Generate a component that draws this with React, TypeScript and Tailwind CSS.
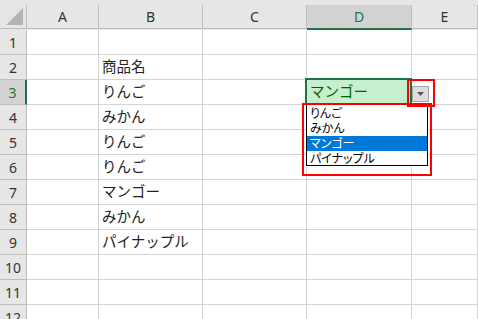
import React from "react";

const font = "font-['Noto_Sans','Noto_Sans_CJK_JP',sans-serif]";

const cols = [
  { name: "A", w: "w-[72px]" },
  { name: "B", w: "w-[104px]" },
  { name: "C", w: "w-[104px]" },
  { name: "D", w: "w-[105px]" },
  { name: "E", w: "flex-1" },
];

const values: Record<number, string> = {
  2: "商品名",
  3: "りんご",
  4: "みかん",
  5: "りんご",
  6: "りんご",
  7: "マンゴー",
  8: "みかん",
  9: "パイナップル",
};

const options = ["りんご", "みかん", "マンゴー", "パイナップル"];

function HeaderRow() {
  return (
    <div className="flex h-[30px] bg-[#e6e6e6] pt-[5px]">
      <div className="w-[27px] h-[24px] border-r border-b border-[#bdbdbd] relative">
        <svg className="absolute left-[6px] top-[3px]" width="18" height="18" viewBox="0 0 18 18">
          <polygon points="17,0 17,17 0,17" fill="#b4b4b4" />
        </svg>
      </div>
      {cols.map((c) =>
        c.name === "D" ? (
          <div
            key={c.name}
            className={`${c.w} h-[25px] -mb-px bg-[#d2d2d2] border-r border-[#bdbdbd] border-b-2 border-b-[#217346] flex items-center justify-center text-[14px] text-[#217346]`}
          >
            {c.name}
          </div>
        ) : (
          <div
            key={c.name}
            className={`${c.w} h-[24px] border-r border-b border-[#bdbdbd] flex items-center justify-center text-[14px] text-[#333]`}
          >
            {c.name}
          </div>
        )
      )}
    </div>
  );
}

function Row({ n }: { n: number }) {
  const active = n === 3;
  return (
    <div className="flex h-[25px]">
      <div
        className={
          active
            ? "w-[27px] h-[25px] bg-[#d2d2d2] border-b border-[#bdbdbd] border-r-2 border-r-[#217346] flex items-center justify-center text-[14px] text-[#217346]"
            : "w-[27px] h-[25px] bg-[#e6e6e6] border-b border-r border-[#bdbdbd] flex items-center justify-center text-[14px] text-[#333]"
        }
      >
        {n}
      </div>
      {cols.map((c) => (
        <div
          key={c.name}
          className={`${c.w} h-[25px] border-r border-b border-[#d4d4d4] flex items-center pl-[3px] text-[14.5px] text-[#222] whitespace-nowrap`}
        >
          {c.name === "B" ? values[n] : ""}
        </div>
      ))}
    </div>
  );
}

export default function App() {
  const rows = Array.from({ length: 12 }, (_, i) => i + 1);
  return (
    <div className={`relative w-[478px] h-[319px] overflow-hidden bg-white ${font}`}>
      <HeaderRow />
      {rows.map((n) => (
        <Row key={n} n={n} />
      ))}

      {/* selected cell D3 */}
      <div className="absolute left-[305px] top-[78px] w-[107px] h-[27px] border-2 border-[#217346] bg-[#c6efce] flex items-center pl-[3px] text-[14.5px] text-[#006100]">
        マンゴー
      </div>

      {/* dropdown button */}
      <div className="absolute left-[412px] top-[86px] w-[17px] h-[16px] bg-[#dedede] border border-[#a6a6a6] flex items-center justify-center">
        <svg width="7" height="4" viewBox="0 0 7 4">
          <polygon points="0,0 7,0 3.5,4" fill="#555" />
        </svg>
      </div>

      {/* dropdown list */}
      <div className="absolute left-[306px] top-[104px] w-[122px] h-[62px] bg-white border border-black py-px flex flex-col [font-feature-settings:'palt'] text-[12px] text-black">
        {options.map((o) => (
          <div
            key={o}
            className={
              o === "マンゴー"
                ? "h-[15px] leading-[15px] pl-[3px] bg-[#0078d7] text-white"
                : "h-[15px] leading-[15px] pl-[3px]"
            }
          >
            {o}
          </div>
        ))}
      </div>

      {/* red highlight boxes */}
      <div className="absolute left-[407px] top-[79px] w-[28px] h-[28px] border-2 border-[#ff0000]" />
      <div className="absolute left-[302px] top-[103px] w-[130px] h-[73px] border-2 border-[#ff0000]" />
    </div>
  );
}
